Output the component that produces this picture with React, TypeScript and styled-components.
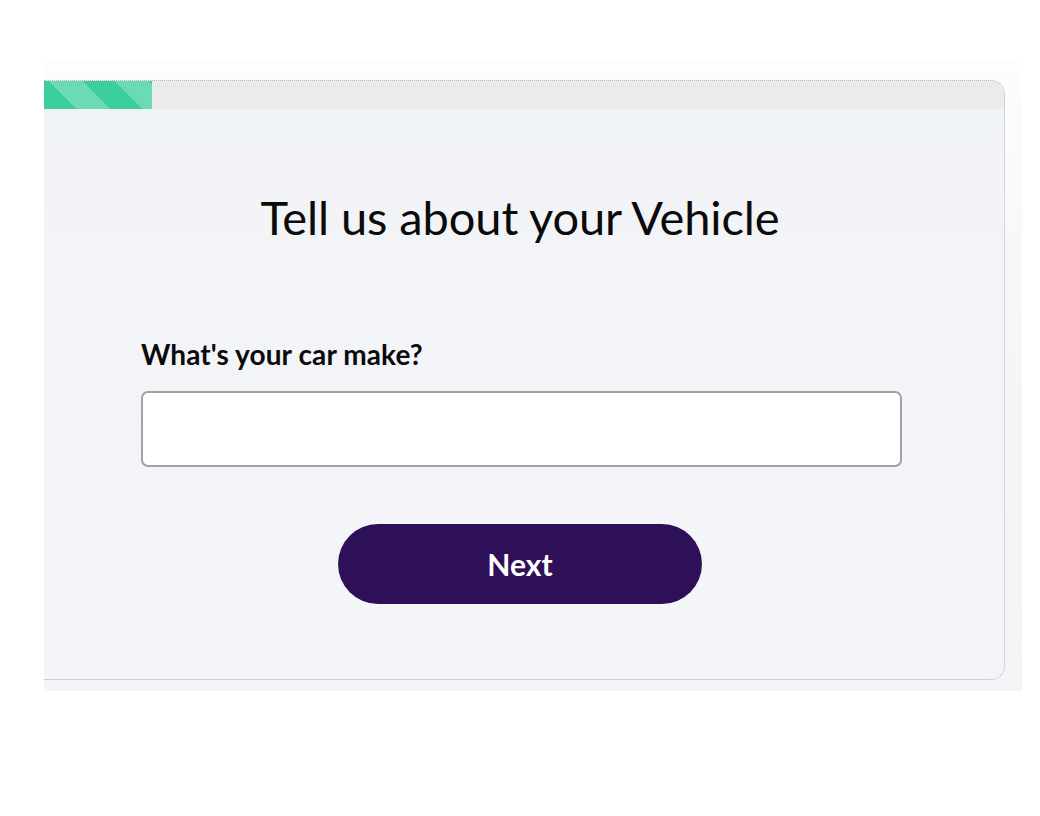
import React from 'react';
import styled, {createGlobalStyle} from 'styled-components';

const GlobalStyle = createGlobalStyle`
  html, body {
    margin: 0;
    padding: 0;
    background: #ffffff;
  }

  body {
    font-family: Lato, "Open Sans", "Liberation Sans", sans-serif;
    color: #0b0b0b;
  }
`;

const Page = styled.div`
  width: 1040px;
  height: 816px;
  padding-top: 60px;
  box-sizing: border-box;
`;

const Backdrop = styled.div`
  margin-left: 44px;
  width: 978px;
  padding: 20px 17px 11px 0;
  box-sizing: border-box;
  background: linear-gradient(to bottom, #fdfdfe 0%, #f6f6f9 40%, #f5f5f8 100%);
`;

const Card = styled.section`
  height: 600px;
  box-sizing: border-box;
  border: 1px dotted #b4b4b8;
  border-left: none;
  border-radius: 0 14px 14px 0;
  overflow: hidden;
  background: linear-gradient(to bottom, #eff2f5 0%, #f3f4f7 30%, #f4f5f8 100%);
  display: flex;
  flex-direction: column;
`;

const ProgressTrack = styled.div`
  height: 28px;
  background: #ebebeb;
  display: flex;
`;

const ProgressFill = styled.div`
  height: 100%;
  background: repeating-linear-gradient(
    45deg,
    #3ccf9c 0 23px,
    #6bdbb5 23px 47px
  );
`;

const Body = styled.div`
  width: 758px;
  margin-left: 97px;
  display: flex;
  flex-direction: column;
  align-items: center;
`;

const Title = styled.h1`
  margin: 80px 0 0;
  font-size: 47px;
  line-height: 56px;
  font-weight: 400;
  letter-spacing: -0.1px;
`;

const Field = styled.label`
  align-self: stretch;
  margin: 92px -3px 0 0;
  display: flex;
  flex-direction: column;
  gap: 20px;
`;

const LabelText = styled.span`
  font-size: 28px;
  line-height: 34px;
  font-weight: 700;
  letter-spacing: 0.1px;
`;

const TextInput = styled.input`
  height: 76px;
  box-sizing: border-box;
  border: 2px solid #a2a2a6;
  border-radius: 7px;
  background: #ffffff;
  font: inherit;
  font-size: 22px;
  padding: 0 18px;
  outline: none;
`;

const NextButton = styled.button`
  margin-top: 57px;
  width: 364px;
  height: 80px;
  border: none;
  border-radius: 40px;
  background: #2e1059;
  color: #ffffff;
  font-family: inherit;
  font-size: 30px;
  font-weight: 700;
  cursor: pointer;
`;

const App = () => {
    const progress = 108;

    return <>
        <GlobalStyle/>
        <Page>
            <Backdrop>
                <Card>
                    <ProgressTrack>
                        <ProgressFill style={{width: progress + 'px'}}/>
                    </ProgressTrack>
                    <Body>
                        <Title>Tell us about your Vehicle</Title>
                        <Field>
                            <LabelText>What's your car make?</LabelText>
                            <TextInput type="text" name="make"/>
                        </Field>
                        <NextButton type="button">Next</NextButton>
                    </Body>
                </Card>
            </Backdrop>
        </Page>
    </>;
};

export default App;
